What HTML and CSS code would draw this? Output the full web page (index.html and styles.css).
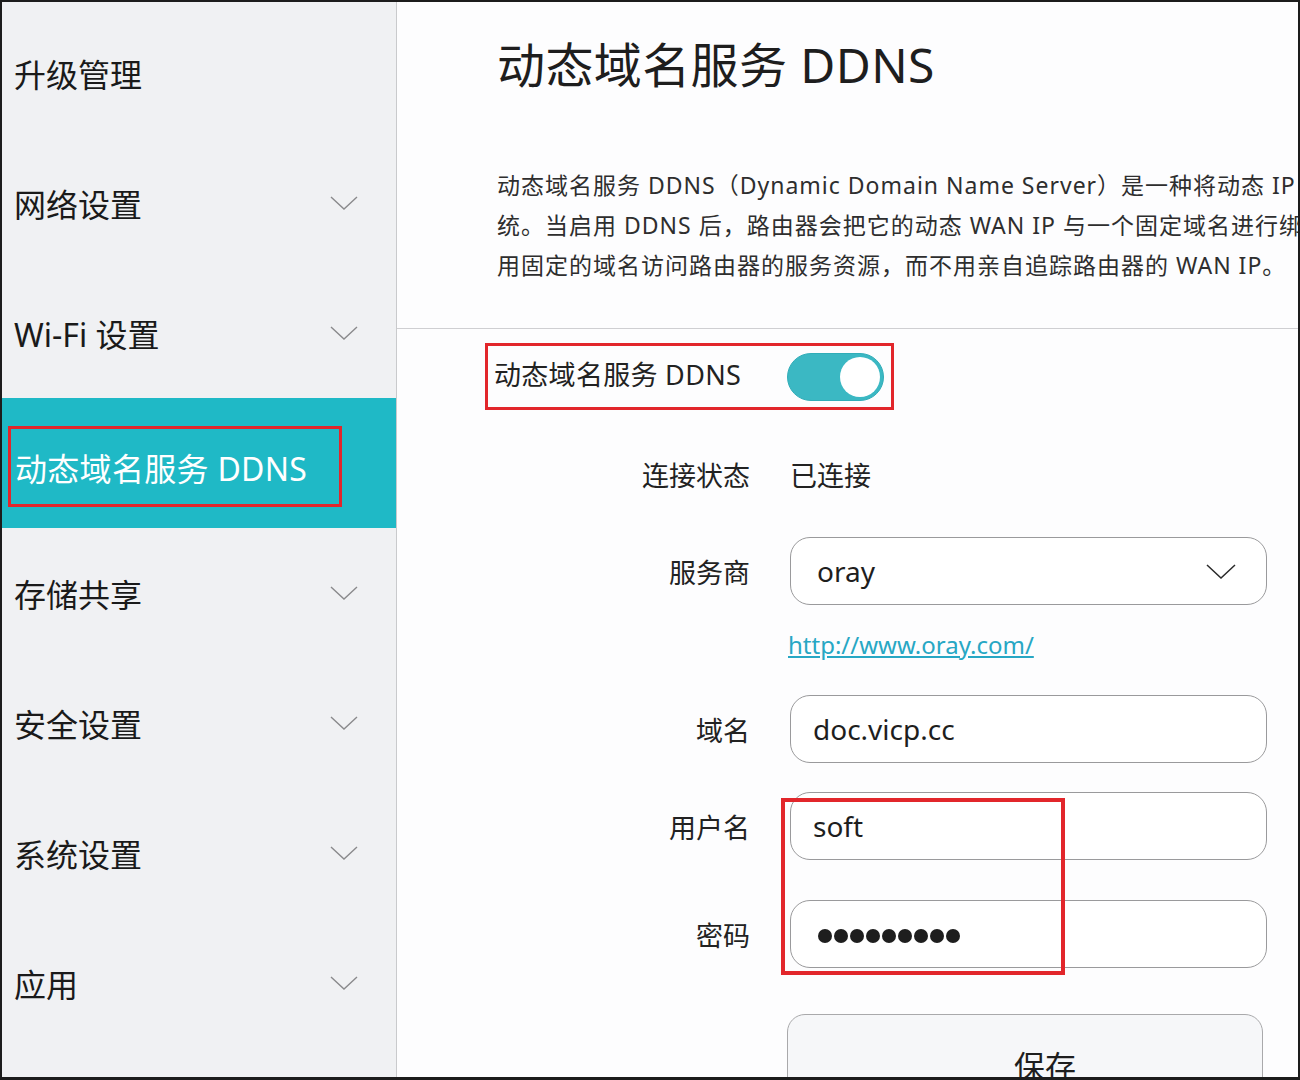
FILE: index.html
```html
<!DOCTYPE html>
<html lang="zh-CN">
  <head>
    <meta charset="UTF-8" />
    <meta name="viewport" content="width=device-width, initial-scale=1.0" />
    <title>动态域名服务 DDNS</title>
    <link rel="stylesheet" href="styles.css">
  </head>
  <body>
    <div class="frame">
      <div class="sidebar">
        <div class="menu-item">升级管理</div>
        <div class="menu-item">网络设置
          <svg class="chev" viewBox="0 0 28 14"><polyline points="1,1 14,13 27,1" /></svg>
        </div>
        <div class="menu-item">Wi-Fi 设置
          <svg class="chev" viewBox="0 0 28 14"><polyline points="1,1 14,13 27,1" /></svg>
        </div>
        <div class="menu-item active">
          <span class="mark">动态域名服务 DDNS</span>
        </div>
        <div class="menu-item">存储共享
          <svg class="chev" viewBox="0 0 28 14"><polyline points="1,1 14,13 27,1" /></svg>
        </div>
        <div class="menu-item">安全设置
          <svg class="chev" viewBox="0 0 28 14"><polyline points="1,1 14,13 27,1" /></svg>
        </div>
        <div class="menu-item">系统设置
          <svg class="chev" viewBox="0 0 28 14"><polyline points="1,1 14,13 27,1" /></svg>
        </div>
        <div class="menu-item">应用
          <svg class="chev" viewBox="0 0 28 14"><polyline points="1,1 14,13 27,1" /></svg>
        </div>
      </div>

      <div class="main">
        <div class="head">
          <h1 class="title">动态域名服务 DDNS</h1>
          <p class="desc">
            动态域名服务 DDNS（Dynamic Domain Name Server）是一种将动态 IP<br>
            统。当启用 DDNS 后，路由器会把它的动态 WAN IP 与一个固定域名进行绑<br>
            用固定的域名访问路由器的服务资源，而不用亲自追踪路由器的 WAN IP。
          </p>
        </div>

        <div class="form">
          <div class="toggle-row">
            <span class="toggle-label">动态域名服务 DDNS</span>
            <span class="switch"><span class="knob"></span></span>
          </div>

          <div class="row status">
            <span class="label">连接状态</span>
            <span class="value">已连接</span>
          </div>

          <div class="row">
            <span class="label">服务商</span>
            <div class="field select">
              <span>oray</span>
              <svg class="sel-chev" viewBox="0 0 30 15"><polyline points="1,1 15,14 29,1" /></svg>
            </div>
          </div>

          <div class="link-row">
            <a class="link" href="#">http://www.oray.com/</a>
          </div>

          <div class="row domain">
            <span class="label">域名</span>
            <div class="field">doc.vicp.cc</div>
          </div>

          <div class="creds">
            <div class="row">
              <span class="label">用户名</span>
              <div class="field">soft</div>
            </div>
            <div class="row pass">
              <span class="label">密码</span>
              <div class="field">
                <span class="dots"><i></i><i></i><i></i><i></i><i></i><i></i><i></i><i></i><i></i></span>
              </div>
            </div>
            <div class="annot"></div>
          </div>

          <div class="save-row">
            <button class="save">保存</button>
          </div>
        </div>
      </div>
    </div>
  </body>
</html>
```

FILE: styles.css
```css
* {
  padding: 0;
  margin: 0;
  box-sizing: border-box;
}
body {
  font-family: "Noto Sans", "Noto Sans CJK SC", sans-serif;
  color: #1c1c1c;
  background: #1c1c1c;
}
.frame {
  display: flex;
  height: 1080px;
  border: 2px solid #1c1c1c;
  border-bottom-width: 3px;
  overflow: hidden;
}

/* sidebar */
.sidebar {
  width: 395px;
  flex-shrink: 0;
  padding-top: 6px;
  background: #f0f1f3;
  border-right: 1px solid #c9cacc;
}
.menu-item {
  display: flex;
  justify-content: space-between;
  align-items: center;
  height: 130px;
  padding: 0 38px 0 12px;
  font-size: 32px;
  color: #1a1a1a;
}
.chev {
  width: 28px;
  height: 14px;
  fill: none;
  stroke: #8a8a8c;
  stroke-width: 1.4;
}
.menu-item.active {
  background: #1fb9c6;
  color: #fff;
  padding-left: 6px;
  padding-top: 7px;
}
.mark {
  display: flex;
  align-items: center;
  width: 334px;
  height: 81px;
  padding-left: 4px;
  border: 3px solid #e2262b;
  letter-spacing: 0.3px;
}

/* main */
.main {
  flex: 1;
  min-width: 0;
  overflow: hidden;
  background: #fdfdfe;
}
.head {
  padding: 31px 0 43px 100px;
  border-bottom: 1px solid #cfcfd2;
}
.title {
  font-size: 48px;
  font-weight: 400;
  line-height: 64px;
  color: #1e1e1e;
  letter-spacing: 0.4px;
}
.desc {
  margin-top: 68px;
  font-size: 23px;
  line-height: 40px;
  color: #2e2e2e;
  white-space: nowrap;
  letter-spacing: 1px;
}

.form {
  padding-top: 14px;
}
.toggle-row {
  display: flex;
  justify-content: space-between;
  align-items: center;
  width: 409px;
  height: 67px;
  margin-left: 88px;
  padding: 0 7px 0 6px;
  border: 3px solid #e2262b;
}
.toggle-label {
  font-size: 27px;
  color: #222;
  margin-top: -6px;
  letter-spacing: 0.3px;
}
.switch {
  position: relative;
  width: 97px;
  height: 48px;
  border-radius: 24px;
  background: #3bb8c3;
  border: 1px solid #31adb8;
}
.knob {
  position: absolute;
  top: 3px;
  right: 3px;
  width: 40px;
  height: 40px;
  border-radius: 50%;
  background: #fff;
}

.row {
  display: flex;
  align-items: center;
  height: 68px;
  margin-top: 29px;
}
.row.status {
  margin-top: 30px;
}
.row.domain {
  margin-top: 27px;
}
.row.pass {
  margin-top: 40px;
}
.label {
  width: 353px;
  margin-right: 40px;
  text-align: right;
  font-size: 27px;
  color: #222;
}
.value {
  font-size: 27px;
  color: #222;
}
.field {
  display: flex;
  align-items: center;
  width: 477px;
  height: 68px;
  padding: 0 26px 0 22px;
  border: 1px solid #9a9a9c;
  border-radius: 20px;
  background: #fff;
  font-size: 28px;
  color: #1e1e1e;
}
.select {
  justify-content: space-between;
  padding-left: 26px;
}
.sel-chev {
  width: 30px;
  height: 15px;
  fill: none;
  stroke: #2a2a2a;
  stroke-width: 1.5;
  margin-right: 4px;
}
.link-row {
  display: flex;
  align-items: center;
  height: 48px;
  margin-top: 15px;
  padding-left: 391px;
}
.link {
  font-size: 24px;
  color: #27a7c4;
  text-decoration: underline;
}
.dots {
  display: flex;
  gap: 2px;
  margin-left: 5px;
  margin-top: 4px;
}
.dots i {
  width: 14px;
  height: 14px;
  border-radius: 50%;
  background: #1e1e1e;
}

.creds {
  position: relative;
}
.annot {
  position: absolute;
  top: 6px;
  left: 384px;
  width: 284px;
  height: 177px;
  border: 4px solid #e2262b;
}

.save-row {
  margin-top: 46px;
  padding-left: 390px;
}
.save {
  width: 476px;
  height: 90px;
  padding: 10px 0 0 40px;
  border: 1px solid #a9a9ab;
  border-radius: 18px;
  background: #f6f7f9;
  font-family: "Noto Sans", "Noto Sans CJK SC", sans-serif;
  font-size: 31px;
  color: #1e1e1e;
}
```
